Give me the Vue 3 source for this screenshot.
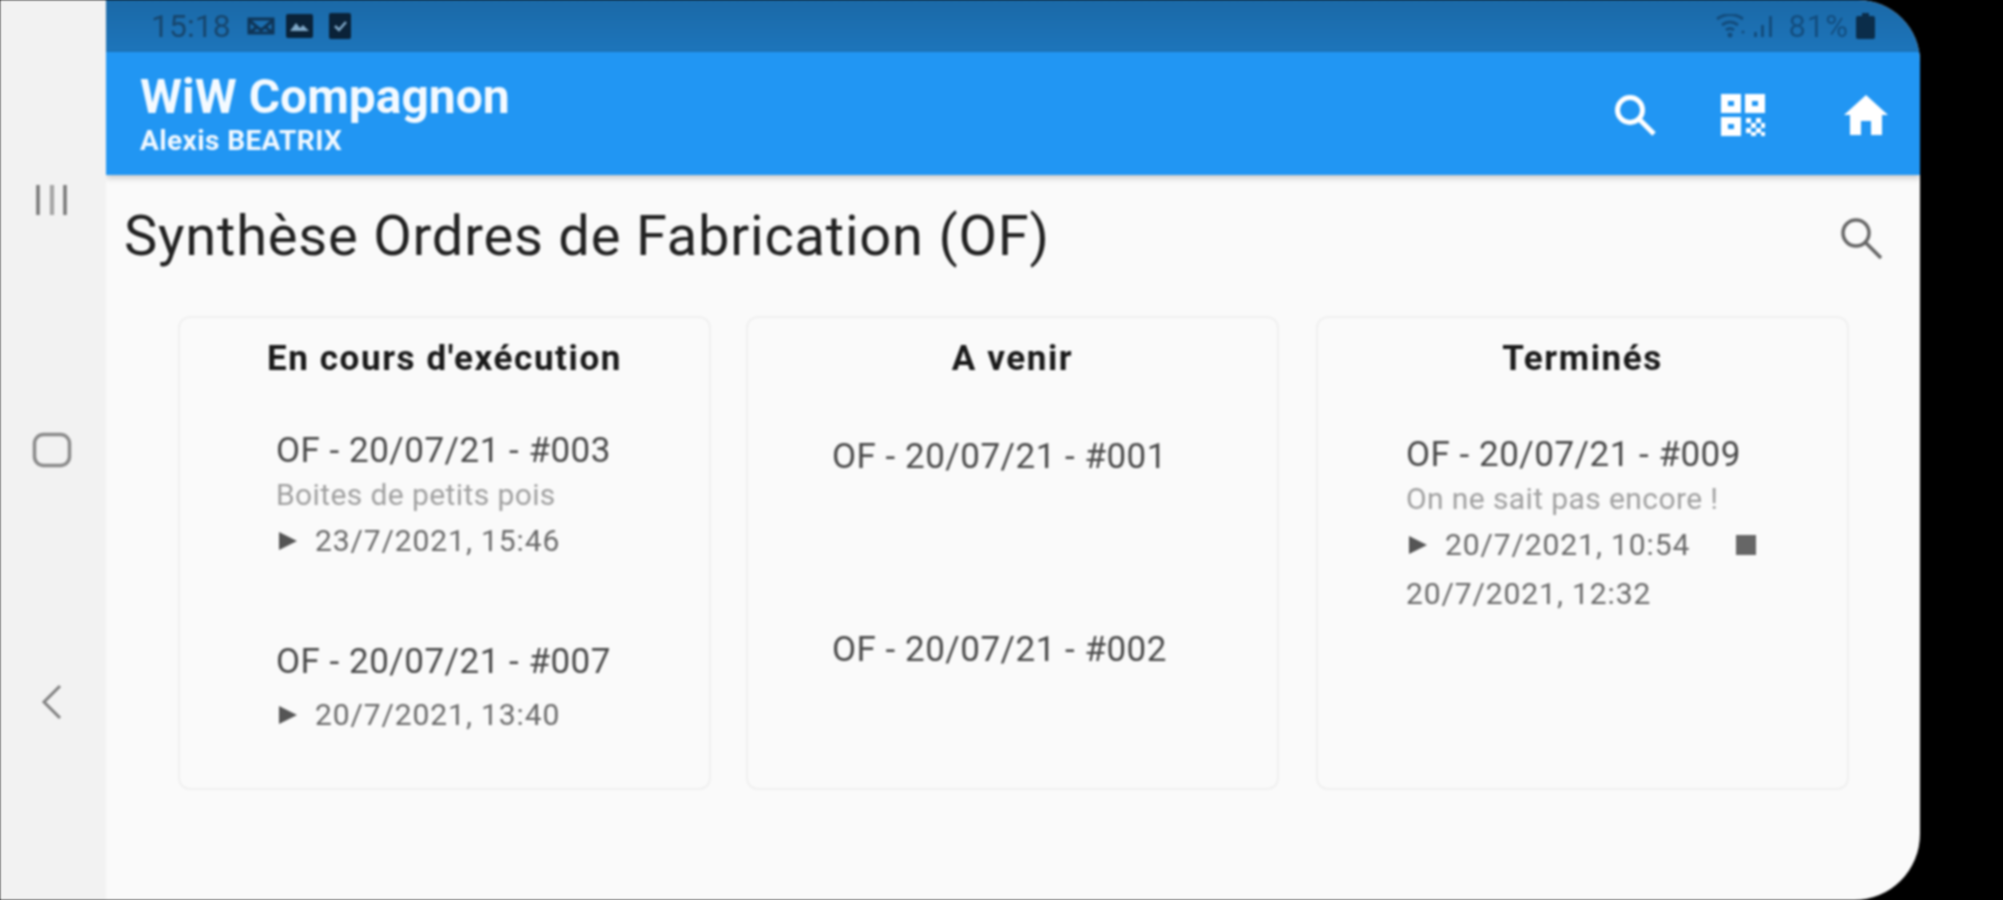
<script setup>
const columns = [
  {
    key: 'running',
    title: "En cours d'exécution",
    items: [
      { name: 'OF - 20/07/21 - #003', desc: 'Boites de petits pois', start: '23/7/2021, 15:46' },
      { name: 'OF - 20/07/21 - #007', start: '20/7/2021, 13:40' }
    ]
  },
  {
    key: 'next',
    title: 'A venir',
    items: [
      { name: 'OF - 20/07/21 - #001' },
      { name: 'OF - 20/07/21 - #002' }
    ]
  },
  {
    key: 'done',
    title: 'Terminés',
    items: [
      { name: 'OF - 20/07/21 - #009', desc: 'On ne sait pas encore !', start: '20/7/2021, 10:54', end: '20/7/2021, 12:32' }
    ]
  }
]
</script>

<template>
  <div class="device">
    <nav class="softkeys">
      <svg class="key" width="40" height="36" viewBox="0 0 40 36">
        <path d="M6 3v30M20 3v30M33 3v30" fill="none" stroke="#777" stroke-width="3.5" />
        <path d="M20 3v30" fill="none" stroke="#f2f2f2" stroke-width="1.5" opacity=".6" />
      </svg>
      <svg class="key" width="40" height="36" viewBox="0 0 40 36">
        <rect x="2.5" y="2.5" width="35" height="31" rx="9" fill="none" stroke="#8a8a8a" stroke-width="3.5" />
      </svg>
      <svg class="key back" width="40" height="36" viewBox="0 0 40 36">
        <path d="M28 2L12 18l16 16" fill="none" stroke="#808080" stroke-width="3" />
      </svg>
    </nav>

    <div class="screen">
      <div class="status">
        <div class="status-left">
          <span class="clock">15:18</span>
          <svg width="28" height="18" viewBox="0 0 28 18">
            <path d="M2 2h24v14H2zM2 3l8 7-8 6M26 3l-8 7 8 6M10 10l4 3 4-3" fill="none" stroke="#0f3557" stroke-width="3" />
          </svg>
          <svg width="27" height="24" viewBox="0 0 27 24">
            <rect width="27" height="24" rx="2" fill="#0a2238" />
            <path d="M4 17l6-8 4 5 3-3 6 6z" fill="#7fa8c8" />
          </svg>
          <svg class="check" width="22" height="26" viewBox="0 0 22 26">
            <rect width="22" height="26" rx="2" fill="#0a2238" />
            <path d="M6 13l4 4 7-8" fill="none" stroke="#7fa8c8" stroke-width="2.5" />
          </svg>
        </div>
        <div class="status-right">
          <svg width="30" height="24" viewBox="0 0 30 24">
            <path d="M1 5q13-9 26 0M6 11q8-6 16 0M10 16q4-3 8 0" fill="none" stroke="#134d7e" stroke-width="3" />
            <circle cx="14" cy="21" r="2.5" fill="#134d7e" />
            <circle cx="27" cy="18" r="1.5" fill="#134d7e" />
          </svg>
          <svg width="20" height="24" viewBox="0 0 20 24">
            <path d="M1 18h3v5H1zM8 11h3v12H8zM16 2h3v21h-3z" fill="#134d7e" />
          </svg>
          <span class="battery-text">81%</span>
          <svg width="19" height="26" viewBox="0 0 19 26">
            <path d="M6 0h7v3h4a2 2 0 0 1 2 2v19a2 2 0 0 1-2 2H2a2 2 0 0 1-2-2V5a2 2 0 0 1 2-2h4z" fill="#0b2d4a" />
          </svg>
        </div>
      </div>

      <header class="appbar">
        <div class="brand">
          <div class="brand-name">WiW Compagnon</div>
          <div class="brand-user">Alexis BEATRIX</div>
        </div>
        <div class="actions">
          <svg class="search-icon" width="42" height="42" viewBox="0 0 42 42">
            <circle cx="16" cy="16" r="12.5" fill="none" stroke="#fff" stroke-width="5" />
            <path d="M25 25l15 15" fill="none" stroke="#fff" stroke-width="5" />
          </svg>
          <svg class="qr-icon" width="44" height="42" viewBox="0 0 44 42" fill-rule="evenodd">
            <path d="M0 0h20v19H0zM7 7v5h6V7zM24 0h20v19H24zM31 7v5h6V7zM0 23h20v19H0zM7 30v5h6v-5z" fill="#fff" />
            <path d="M25 24h5v5h-5zM35 24h5v5h-5zM30 29h5v5h-5zM40 29h4v5h-4zM25 34h5v5h-5zM35 34h5v5h-5zM30 38h5v4h-5zM40 38h4v4h-4z" fill="#fff" />
          </svg>
          <svg class="home-icon" width="44" height="40" viewBox="0 0 44 40">
            <path d="M22 0L0 20h6v20h11V26h10v14h11V20h6z" fill="#fff" />
          </svg>
        </div>
      </header>

      <main class="content">
        <div class="page-head">
          <h1 class="page-title">Synthèse Ordres de Fabrication (OF)</h1>
          <svg class="page-search" width="42" height="42" viewBox="0 0 42 42">
            <circle cx="16" cy="16" r="13" fill="none" stroke="#666" stroke-width="3.5" />
            <path d="M25.5 25.5L41 41" fill="none" stroke="#666" stroke-width="3.5" />
          </svg>
        </div>

        <div class="board">
          <section v-for="col in columns" :key="col.key" class="card" :class="'card-' + col.key">
            <h2 class="card-title">{{ col.title }}</h2>
            <div class="list">
              <article v-for="item in col.items" :key="item.name" class="item">
                <div class="item-name">{{ item.name }}</div>
                <div v-if="item.desc" class="item-desc">{{ item.desc }}</div>
                <div v-if="item.start" class="item-dates">
                  <svg class="play" width="18" height="18" viewBox="0 0 18 18">
                    <path d="M0 0l18 9L0 18z" fill="#555" />
                  </svg>
                  <span>{{ item.start }}</span>
                  <template v-if="item.end">
                    <span class="stop"></span>
                    <span class="end-date">{{ item.end }}</span>
                  </template>
                </div>
              </article>
            </div>
          </section>
        </div>
      </main>
    </div>
  </div>
</template>

<style>
html, body {
  margin: 0;
  background: #000;
}
</style>

<style scoped>
.device {
  display: flex;
  width: 2003px;
  height: 900px;
  background: #000;
  overflow: hidden;
  font-family: Roboto, "Liberation Sans", sans-serif;
  filter: blur(0.8px);
}

.softkeys {
  flex: none;
  width: 106px;
  height: 900px;
  box-sizing: border-box;
  padding: 182px 0 0 32px;
  display: flex;
  flex-direction: column;
  gap: 214px;
  background: #f2f2f2;
}

.key {
  display: block;
}

.back {
  margin-top: 2px;
}

.screen {
  flex: none;
  width: 1814px;
  height: 900px;
  display: flex;
  flex-direction: column;
  background: #fafafa;
  border-radius: 0 62px 66px 0;
  overflow: hidden;
}

.status {
  flex: none;
  height: 52px;
  box-sizing: border-box;
  padding: 0 45px 0 45px;
  display: flex;
  align-items: center;
  justify-content: space-between;
  background: linear-gradient(#1b69a7, #1d75bb);
}

.status-left,
.status-right {
  display: flex;
  align-items: center;
}

.status-left {
  gap: 11px;
}

.status-right {
  gap: 7px;
}

.check {
  margin-left: 5px;
}

.clock {
  margin-right: 5px;
  font-size: 32px;
  color: #17466d;
}

.battery-text {
  margin-left: 8px;
  font-size: 31px;
  letter-spacing: 1px;
  color: #134d7e;
}

.appbar {
  flex: none;
  height: 123px;
  box-sizing: border-box;
  padding: 0 32px 0 34px;
  display: flex;
  align-items: center;
  justify-content: space-between;
  background: #2196f3;
  box-shadow: 0 3px 6px rgba(0, 0, 0, 0.2);
  position: relative;
}

.brand-name {
  font-size: 48px;
  font-weight: 700;
  line-height: 52px;
  color: #f4faff;
}

.brand-user {
  margin-top: 2px;
  font-size: 28px;
  font-weight: 700;
  letter-spacing: 0.4px;
  line-height: 32px;
  color: #f0f8ff;
}

.actions {
  display: flex;
  align-items: center;
  margin-top: 3px;
}

.qr-icon {
  margin-left: 65px;
}

.home-icon {
  margin-left: 79px;
}

.content {
  flex: 1;
  box-sizing: border-box;
  padding: 0 38px 0 18px;
}

.page-head {
  height: 141px;
  box-sizing: border-box;
  padding-bottom: 20px;
  display: flex;
  align-items: center;
  justify-content: space-between;
}

.page-title {
  margin: 0;
  font-size: 56px;
  font-weight: 400;
  letter-spacing: 0.8px;
  color: #222;
}

.page-search {
  margin-top: 5px;
}

.board {
  display: flex;
  gap: 35px;
  padding-left: 54px;
}

.card {
  width: 533px;
  height: 474px;
  box-sizing: border-box;
  border: 2px solid #f0f0f0;
  border-radius: 12px;
  background: #fafafa;
}

.card-done {
  margin-left: 2px;
}

.card-title {
  margin: 0;
  padding-top: 21px;
  font-size: 35px;
  font-weight: 700;
  letter-spacing: 1.6px;
  line-height: 40px;
  text-align: center;
  color: #1a1a1a;
}

.list {
  display: flex;
  flex-direction: column;
}

.card-running .list {
  padding: 52px 0 0 96px;
  gap: 85px;
}

.card-next .list {
  padding: 58px 0 0 84px;
  gap: 153px;
}

.card-done .list {
  padding: 56px 0 0 88px;
}

.item-name {
  font-size: 35px;
  letter-spacing: 0.5px;
  line-height: 40px;
  color: #4a4a4a;
}

.item-desc {
  margin-top: 8px;
  font-size: 30px;
  letter-spacing: 0.4px;
  line-height: 32px;
  color: #a0a0a0;
}

.item-dates {
  margin-top: 14px;
  display: flex;
  flex-wrap: wrap;
  align-items: center;
  width: 400px;
  font-size: 30px;
  letter-spacing: 0.9px;
  line-height: 32px;
  color: #6a6a6a;
}

.item-name + .item-dates {
  margin-top: 17px;
}

.play {
  margin: 0 18px 0 3px;
}

.stop {
  width: 20px;
  height: 20px;
  margin-left: 46px;
  background: #666;
}

.end-date {
  flex: 0 0 100%;
  margin-top: 17px;
}
</style>
